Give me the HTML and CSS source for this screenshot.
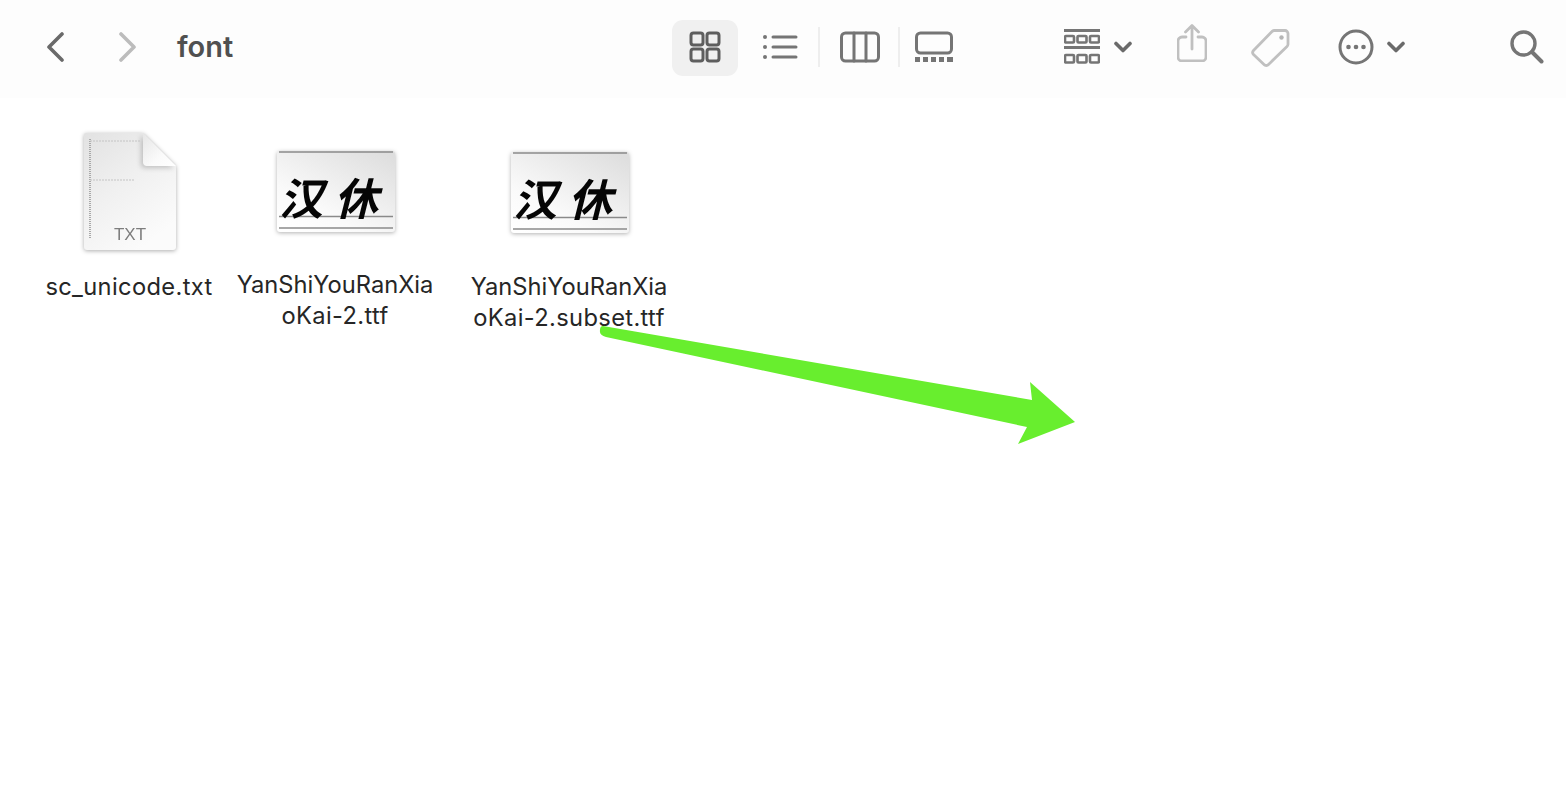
FILE: index.html
```html
<!DOCTYPE html>
<html lang="en">
<head>
<meta charset="utf-8">
<title>font</title>
<link rel="stylesheet" href="styles.css">
</head>
<body>
<header class="toolbar">
  <svg class="ico back" width="18" height="30" viewBox="0 0 18 30"><path d="M16 2 3 15l13 13" class="dk"/></svg>
  <svg class="ico forward" width="18" height="30" viewBox="0 0 18 30"><path d="M2 2l13 13L2 28" class="lt"/></svg>
  <h1 class="title">font</h1>
  <div class="pill">
    <svg class="ico" width="32" height="32" viewBox="0 0 32 32"><g class="dk2"><rect x="2" y="2" width="12" height="12" rx="2.5"/><rect x="18" y="2" width="12" height="12" rx="2.5"/><rect x="2" y="18" width="12" height="12" rx="2.5"/><rect x="18" y="18" width="12" height="12" rx="2.5"/></g></svg>
  </div>
  <svg class="ico list" width="36" height="28" viewBox="0 0 36 28"><path d="M11 4h23M11 14h23M11 24h23" class="md"/><circle cx="3" cy="4" r="2" class="dot"/><circle cx="3" cy="14" r="2" class="dot"/><circle cx="3" cy="24" r="2" class="dot"/></svg>
  <span class="sep sep1"></span>
  <svg class="ico cols" width="40" height="32" viewBox="0 0 40 32"><g class="md"><rect x="1.5" y="2" width="37" height="28" rx="4"/><path d="M14 2v28M26 2v28"/></g></svg>
  <span class="sep sep2"></span>
  <svg class="ico gallery" width="38" height="32" viewBox="0 0 38 32"><rect x="1.5" y="2" width="35" height="20" rx="4" class="md"/><path d="M0 26h5v5H0zM8 26h5v5H8zM16 26h5v5h-5zM24 26h5v5h-5zM32 26h6v5h-6z" class="dot"/></svg>
  <svg class="ico group" width="36" height="36" viewBox="0 0 36 36"><path d="M0 1.5h36M0 18.500h36" class="md"/><g class="md2"><rect x="1" y="7" width="9" height="6.500" rx="1"/><rect x="13.500" y="7" width="9" height="6.500" rx="1"/><rect x="26" y="7" width="9" height="6.500" rx="1"/><rect x="1" y="26" width="9" height="7.500" rx="1"/><rect x="13.500" y="26" width="9" height="7.500" rx="1"/><rect x="26" y="26" width="9" height="7.500" rx="1"/></g></svg>
  <svg class="ico chev chev1" width="18" height="12" viewBox="0 0 18 12"><path d="M2 2.500l7 7 7-7" class="chv"/></svg>
  <svg class="ico share" width="30" height="38" viewBox="0 0 30 38"><path d="M9 13H5a4 4 0 0 0-4 4v16a4 4 0 0 0 4 4h20a4 4 0 0 0 4-4V17a4 4 0 0 0-4-4h-4M15 25V2M8.500 8 15 1.500 21.500 8" class="lt2"/></svg>
  <svg class="ico tag" width="40" height="40" viewBox="0 0 40 40"><path d="M2.500 23.500 21 4.500a3 3 0 0 1 2-1h11a3 3 0 0 1 3 3v11a3 3 0 0 1-1 2L17.500 37.500a3 3 0 0 1-4.500 0l-10.500-10a3 3 0 0 1 0-4z" class="lt2"/><circle cx="30.500" cy="10.500" r="2.200" class="ltdot"/></svg>
  <svg class="ico more" width="36" height="36" viewBox="0 0 36 36"><circle cx="18" cy="18" r="16" class="md"/><circle cx="10.500" cy="18" r="2.300" class="dot"/><circle cx="18" cy="18" r="2.300" class="dot"/><circle cx="25.500" cy="18" r="2.300" class="dot"/></svg>
  <svg class="ico chev chev2" width="18" height="12" viewBox="0 0 18 12"><path d="M2 2.500l7 7 7-7" class="chv"/></svg>
  <svg class="ico search" width="34" height="34" viewBox="0 0 34 34"><circle cx="13.500" cy="13.500" r="11.500" class="md3"/><path d="M22 22l9.500 9.500" class="md4"/></svg>
</header>
<main class="files">
  <figure class="file file-txt">
    <svg class="thumb doc" width="100" height="126" viewBox="0 0 100 126">
      <defs>
        <linearGradient id="pg" x1="0" y1="0" x2="0.600" y2="1"><stop offset="0" stop-color="#e2e2e2"/><stop offset="0.500" stop-color="#f0f0f0"/><stop offset="1" stop-color="#fbfbfb"/></linearGradient>
        <linearGradient id="fold" x1="0" y1="0" x2="1" y2="1"><stop offset="0" stop-color="#e6e6e6"/><stop offset="0.600" stop-color="#fafafa"/><stop offset="1" stop-color="#fff"/></linearGradient>
      </defs>
      <path d="M6 2h57l33 33v81a3 3 0 0 1-3 3H7a3 3 0 0 1-3-3V4a2 2 0 0 1 2-2z" fill="url(#pg)"/>
      <path d="M63 2l33 33H67a4 4 0 0 1-4-4z" fill="url(#fold)" class="foldpart"/>
      <path d="M10 8v100" class="tiny"/><path d="M10 10h50M10 49h45" class="tiny2"/>
      <text x="50" y="109" class="txtlabel">TXT</text>
    </svg>
    <figcaption class="name"><span class="wide">sc_unicode.txt</span></figcaption>
  </figure>
  <figure class="file file-ttf1">
    <svg class="thumb ttf" width="122" height="86" viewBox="0 0 122 86">
      <defs><linearGradient id="ff" x1="0.900" y1="0" x2="0.100" y2="1"><stop offset="0" stop-color="#dedede"/><stop offset="0.700" stop-color="#fafafa"/><stop offset="1" stop-color="#fff"/></linearGradient></defs>
      <rect x="2" y="2" width="118" height="81" rx="3" fill="url(#ff)"/>
      <path d="M4 3h114M4 67.500h114M4 79h114" class="rule"/>
      <text x="4" y="66" class="han">汉</text><text x="59" y="66" class="han">休</text>
    </svg>
    <figcaption class="name">YanShiYouRanXia<br><span class="wide">oKai-2.ttf</span></figcaption>
  </figure>
  <figure class="file file-ttf2">
    <svg class="thumb ttf" width="122" height="86" viewBox="0 0 122 86">
      <rect x="2" y="2" width="118" height="81" rx="3" fill="url(#ff)"/>
      <path d="M4 3h114M4 67.500h114M4 79h114" class="rule"/>
      <text x="4" y="66" class="han">汉</text><text x="59" y="66" class="han">休</text>
    </svg>
    <figcaption class="name">YanShiYouRanXia<br><span class="wide">oKai-2.subset.ttf</span></figcaption>
  </figure>
</main>
<svg class="arrow" width="1566" height="792" viewBox="0 0 1566 792"><path d="M603 326 1032 400 1030 382 1075 422 1018 444 1027 427 606 337Q599 335 600 330Q600 326 603 326Z" fill="#68ee2e"/></svg>
</body>
</html>
```

FILE: styles.css
```css
* { box-sizing: border-box; }
html, body { margin: 0; height: 100%; overflow: hidden; }
body {
  background: #fff;
  font-family: Inter, "Noto Sans", sans-serif;
  position: relative;
}
.toolbar {
  height: 98px;
  background: #fdfdfd;
  display: flex;
  align-items: center;
  padding: 0 0 4px 46px;
}
.ico { display: block; flex: none; fill: none; }
.dk, .lt, .md, .md2, .md3, .md4, .dk2, .lt2, .chv, .ltdot, .dot { stroke-linecap: round; stroke-linejoin: round; }
.dk { stroke: #6a6a6a; stroke-width: 3.600; fill: none; }
.lt { stroke: #bcbcbc; stroke-width: 3.600; fill: none; }
.dk2 { stroke: #5e5e5e; stroke-width: 3; fill: none; }
.md { stroke: #757575; stroke-width: 3; fill: none; }
.md2 { stroke: #757575; stroke-width: 2.600; fill: none; }
.md3 { stroke: #757575; stroke-width: 3.400; fill: none; }
.md4 { stroke: #757575; stroke-width: 4; fill: none; }
.lt2 { stroke: #c0c0c0; stroke-width: 2.800; fill: none; }
.ltdot { fill: #b5b5b5; }
.dot { fill: #757575; }
.chv { stroke: #6a6a6a; stroke-width: 3.600; fill: none; }
.forward { margin-left: 55px; }
.title {
  margin: 0 0 0 40px;
  font-size: 29px;
  font-weight: 600;
  color: #505050;
  line-height: 36px;
  width: 60px;
  flex: none;
}
.pill {
  margin-left: 435px;
  margin-top: 2px;
  width: 66px;
  height: 56px;
  border-radius: 11px;
  background: #f0f0f0;
  display: flex;
  align-items: center;
  justify-content: center;
}
.pill .ico { margin-top: -2px; }
.list { margin-left: 24px; }
.sep { display: block; width: 2px; height: 40px; background: #eeeeee; flex: none; }
.sep1 { margin-left: 20px; }
.cols { margin-left: 20px; }
.sep2 { margin-left: 18px; }
.gallery { margin-left: 15px; }
.group { margin-left: 111px; }
.chev1 { margin-left: 14px; }
.share { margin-left: 45px; margin-top: -9px; }
.tag { margin-left: 44px; }
.more { margin-left: 47px; }
.chev2 { margin-left: 13px; }
.search { margin-left: 105px; }

.files { display: flex; align-items: flex-start; padding: 33px 0 0 31px; }
.file { margin: 0; width: 196px; flex: none; display: flex; flex-direction: column; align-items: center; }
.thumb { display: block; }
.doc { filter: drop-shadow(0 1.500px 2px rgba(0,0,0,.32)); margin-left: 2px; }
.foldpart { filter: drop-shadow(-2px 2px 2.500px rgba(0,0,0,.2)); }
.ttf { filter: drop-shadow(0 1px 2px rgba(0,0,0,.3)); margin-top: 18px; margin-left: 2px; }
.file-ttf1 { margin-left: 10px; }
.file-ttf2 { margin-left: 38px; padding-top: 1px; }
.file-txt .name { margin-top: 14px; }
.file-ttf1 .name { margin-top: 34px; }
.file-ttf2 .name { margin-top: 35px; }
.name {
  font-size: 23.700px;
  line-height: 31px;
  color: #262626;
  text-align: center;
  white-space: nowrap;
}
.wide { letter-spacing: .35px; }
.tiny { stroke: #a8a8a8; stroke-width: 2; stroke-dasharray: 1 1; fill: none; }
.tiny2 { stroke: #c4c4c4; stroke-width: 1; stroke-dasharray: 2 1; fill: none; }
.txtlabel { font-size: 17px; fill: #7d7d7d; text-anchor: middle; font-family: "Liberation Sans", sans-serif; }
.rule { stroke: #8a8a8a; stroke-width: 1.400; fill: none; }
.han { font-family: "Noto Sans CJK SC", sans-serif; font-size: 44px; font-weight: 700; fill: #050505; font-style: italic; }
.arrow { position: absolute; left: 0; top: 0; pointer-events: none; }
```
